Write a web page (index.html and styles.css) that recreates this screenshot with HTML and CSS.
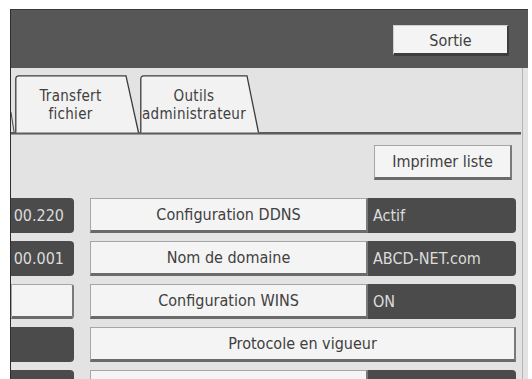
FILE: index.html
```html
<!DOCTYPE html>
<html lang="fr">
<head>
    <meta charset="UTF-8">
    <title>Outils administrateur</title>
    <link rel="stylesheet" href="styles.css">
</head>
<body>
    <div class="screen">
        <div class="header">
            <button class="btn btn-exit">Sortie</button>
        </div>

        <div class="panel">
            <div class="tabs">
                <span class="tab-edge"></span>
                <div class="tab tab-first">
                    <svg class="tab-shape" width="125" height="58" viewBox="0 0 125 58">
                        <path d="M0.8 57.5 V4 Q0.8 0.8 4 0.8 H111 L123.5 57.5" fill="#f2f2f2" stroke="#3c3c3c" stroke-width="1.3"/>
                    </svg>
                    <span class="tab-label">Transfert<br>fichier</span>
                </div>
                <div class="tab tab-second">
                    <svg class="tab-shape" width="120" height="58" viewBox="0 0 120 58">
                        <path d="M0.8 57.5 V4 Q0.8 0.8 4 0.8 H107 L118.5 57.5" fill="#f2f2f2" stroke="#3c3c3c" stroke-width="1.3"/>
                    </svg>
                    <span class="tab-label">Outils<br>administrateur</span>
                </div>
            </div>
            <div class="tab-line"></div>

            <div class="toolbar">
                <button class="btn btn-print">Imprimer liste</button>
            </div>

            <div class="rows">
                <div class="row">
                    <div class="cell-left dark">00.220</div>
                    <button class="btn btn-item">Configuration DDNS</button>
                    <div class="cell-value dark">Actif</div>
                </div>
                <div class="row">
                    <div class="cell-left dark">00.001</div>
                    <button class="btn btn-item">Nom de domaine</button>
                    <div class="cell-value dark">ABCD-NET.com</div>
                </div>
                <div class="row">
                    <div class="cell-left light"></div>
                    <button class="btn btn-item">Configuration WINS</button>
                    <div class="cell-value dark">ON</div>
                </div>
                <div class="row">
                    <div class="cell-left dark"></div>
                    <button class="btn btn-wide">Protocole en vigueur</button>
                </div>
                <div class="row">
                    <div class="cell-left dark"></div>
                    <button class="btn btn-item"></button>
                    <div class="cell-value dark"></div>
                </div>
            </div>
        </div>
    </div>
</body>
</html>
```

FILE: styles.css
```css
* {
    margin: 0;
    padding: 0;
    box-sizing: border-box;
}

body {
    background-color: #fff;
    font-family: "DejaVu Sans Condensed", "DejaVu Sans", sans-serif;
    font-size: 16px;
    color: #404040;
    overflow: hidden;
}

.screen {
    margin: 9px 0 0 10px;
    width: 518px;
    height: 380px;
    border-left: 1px solid #2e2e2e;
    border-top: 1px solid #3a3a3a;
    background-color: #e3e3e3;
    overflow: hidden;
}

/* bandeau du haut */
.header {
    height: 58px;
    background-color: #575757;
    display: flex;
    justify-content: flex-end;
    align-items: flex-start;
    padding: 15px 19px 0 0;
}

.btn {
    font-family: "DejaVu Sans Condensed", "DejaVu Sans", sans-serif;
    font-size: 16px;
    color: #404040;
    background-color: #f4f4f4;
    border: 1px solid #a6a6a6;
    border-right: 2px solid #7a7a7a;
    border-bottom: 3px solid #6a6a6a;
    outline: none;
}

.btn-exit {
    width: 116px;
    height: 31px;
    padding-top: 2px;
    border-color: #cfcfcf;
    border-right-color: #3e3e3e;
    border-bottom-color: #3e3e3e;
}

.panel {
    margin-right: 5px;
    border-right: 1px solid #b4b4b4;
    height: 100%;
}

/* onglets */
.tabs {
    position: relative;
    display: flex;
    height: 64px;
    padding: 7px 0 0 4px;
}

.tab {
    position: relative;
    height: 57px;
    display: flex;
    align-items: center;
    justify-content: center;
}

.tab-first {
    width: 125px;
    padding-right: 14px;
}

.tab-second {
    width: 120px;
    padding-right: 12px;
}

.tab-shape {
    position: absolute;
    left: 0;
    top: 0;
    overflow: visible;
}

.tab-label {
    position: relative;
    text-align: center;
    font-size: 15px;
    letter-spacing: 0.3px;
    line-height: 18px;
    color: #404040;
    padding-top: 3px;
}

.tab-edge {
    position: absolute;
    left: 1px;
    bottom: 0;
    width: 1px;
    height: 20px;
    background-color: #444;
    transform: skewX(9deg);
}

.tab-line {
    height: 3px;
    margin-right: 1px;
    background-color: #5c5c5c;
    border-bottom: 1px solid #9a9a9a;
}

/* bouton imprimer */
.toolbar {
    display: flex;
    justify-content: flex-end;
    padding: 10px 10px 0 0;
    height: 63px;
}

.btn-print {
    width: 138px;
    height: 35px;
}

/* liste des paramètres */
.rows {
    display: flex;
    flex-direction: column;
    gap: 8px;
}

.row {
    display: flex;
    height: 35px;
}

.cell-left {
    width: 63px;
    margin-right: 16px;
    border-radius: 0 4px 4px 0;
    text-align: right;
    padding-right: 10px;
    line-height: 35px;
    white-space: nowrap;
    overflow: hidden;
}

.dark {
    background-color: #4b4b4b;
    color: #dcdcdc;
}

.light {
    background-color: #f4f4f4;
    border: 1px solid #a6a6a6;
    border-right: 2px solid #7a7a7a;
    border-bottom: 3px solid #6a6a6a;
    border-radius: 0 3px 3px 0;
}

.btn-item {
    width: 278px;
    height: 35px;
}

.btn-wide {
    width: 426px;
    height: 35px;
}

.cell-value {
    width: 148px;
    border-radius: 0 4px 4px 0;
    padding-left: 5px;
    line-height: 35px;
    white-space: nowrap;
}
```
